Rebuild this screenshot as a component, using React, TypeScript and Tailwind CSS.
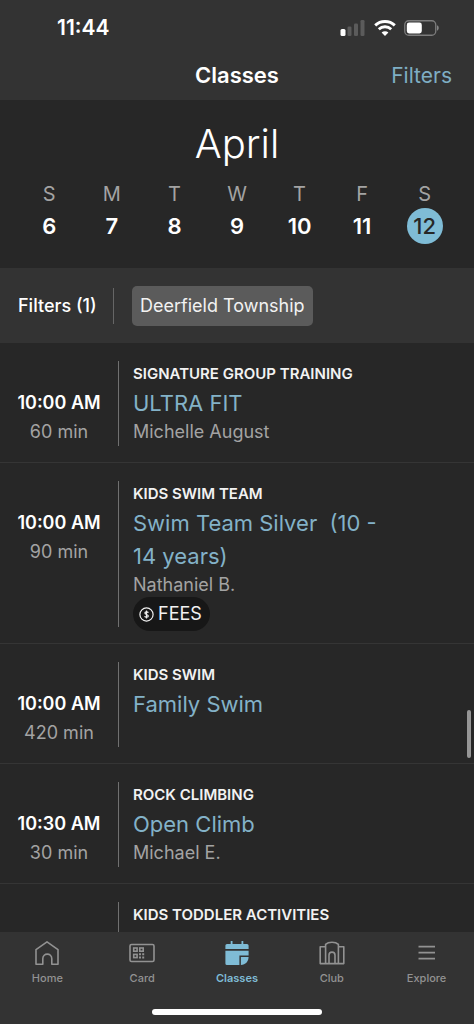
import React from "react";

type ClassItem = {
  time: string;
  duration: string;
  category: string;
  title: string;
  instructor?: string;
  fees?: boolean;
};

const days = [
  { letter: "S", date: 6 },
  { letter: "M", date: 7 },
  { letter: "T", date: 8 },
  { letter: "W", date: 9 },
  { letter: "T", date: 10 },
  { letter: "F", date: 11 },
  { letter: "S", date: 12, selected: true },
];

const classes: ClassItem[] = [
  { time: "10:00 AM", duration: "60 min", category: "SIGNATURE GROUP TRAINING", title: "ULTRA FIT", instructor: "Michelle August" },
  { time: "10:00 AM", duration: "90 min", category: "KIDS SWIM TEAM", title: "Swim Team Silver\u00a0 (10 - 14 years)", instructor: "Nathaniel B.", fees: true },
  { time: "10:00 AM", duration: "420 min", category: "KIDS SWIM", title: "Family Swim" },
  { time: "10:30 AM", duration: "30 min", category: "ROCK CLIMBING", title: "Open Climb", instructor: "Michael E." },
  { time: "", duration: "", category: "KIDS TODDLER ACTIVITIES", title: "" },
];

function StatusIcons() {
  return (
    <div className="flex items-center gap-2">
      <svg width="26" height="16" viewBox="0 0 26 16" aria-hidden="true">
        <rect x="0.5" y="9" width="5" height="7" rx="1.5" fill="#fff" />
        <rect x="7.5" y="6.5" width="4" height="9.5" rx="1.3" fill="#5b5b5b" />
        <rect x="14" y="3.5" width="4" height="12.5" rx="1.3" fill="#5b5b5b" />
        <rect x="20.5" y="0" width="4" height="16" rx="1.3" fill="#5b5b5b" />
      </svg>
      <svg width="22" height="16" viewBox="0 0 22 16" fill="none" stroke="#fff" strokeWidth="2.9" aria-hidden="true">
        <path d="M1.2 5.4C6.6 .2 15.4 .2 20.8 5.4" />
        <path d="M4.8 9.2C8.3 6 13.7 6 17.2 9.2" />
        <path d="M11 16l-3.4-3.5c1.9-1.7 4.9-1.7 6.8 0z" fill="#fff" stroke="none" />
      </svg>
      <svg width="35" height="16" viewBox="0 0 35 16" aria-hidden="true">
        <rect x="0.75" y="0.75" width="31" height="14.5" rx="4" fill="none" stroke="#7d7d7d" strokeWidth="1.3" />
        <rect x="2.8" y="2.6" width="15" height="10.8" rx="2.3" fill="#fff" />
        <path d="M33 5.3c2.3.9 2.3 4.5 0 5.4z" fill="#858585" />
      </svg>
    </div>
  );
}

function HomeIcon() {
  return (
    <svg width="26" height="26" viewBox="0 0 26 26" fill="none" stroke="currentColor" strokeWidth="1.6" strokeLinejoin="round" aria-hidden="true">
      <path d="M2 9.6L13 1.8l11 7.8v14.6h-6.2v-5.4c0-6.2-9-6.2-9 0v5.4H2z" />
    </svg>
  );
}

function CardIcon() {
  return (
    <svg width="26" height="26" viewBox="0 0 26 26" fill="none" stroke="currentColor" strokeWidth="1.6" aria-hidden="true">
      <rect x="1" y="4.5" width="24" height="17" rx="1.5" />
      <rect x="4.7" y="8" width="3.4" height="3.2" />
      <rect x="10.8" y="8" width="3.4" height="3.2" />
      <rect x="4.7" y="14.4" width="3.4" height="3.2" />
      <path d="M10 14.2h2M13.2 14.2h2M10 17.5h2M13.2 17.5h2" strokeWidth="2" />
    </svg>
  );
}

function ClassesIcon() {
  return (
    <svg width="26" height="26" viewBox="0 0 26 26" fill="currentColor" aria-hidden="true">
      <path d="M6.7 1h1.8v3h9V1h1.8v3H23a1.6 1.6 0 0 1 1.6 1.6V9H1.4V5.6A1.6 1.6 0 0 1 3 4h3.7z" />
      <path d="M1.4 10.8h23.2v4.7h-9.2V25H3a1.6 1.6 0 0 1-1.6-1.6z" />
      <path d="M16.9 17h7.7c-.3 4.7-3 7.7-7.7 8z" />
    </svg>
  );
}

function ClubIcon() {
  return (
    <svg width="26" height="26" viewBox="0 0 26 26" fill="none" stroke="currentColor" strokeWidth="1.6" strokeLinejoin="round" aria-hidden="true">
      <path d="M6.6 23.6V4.4c3-2.9 9.8-2.9 12.8 0v19.2" />
      <path d="M6.6 6.8H1.2v16.8h23.6V6.8h-5.4" />
      <path d="M10 23.6v-8.4c0-4.1 6-4.1 6 0v8.4" />
    </svg>
  );
}

function ExploreIcon() {
  return (
    <svg width="26" height="26" viewBox="0 0 26 26" fill="none" stroke="currentColor" strokeWidth="1.8" aria-hidden="true">
      <path d="M4.5 6.7H21M4.5 12.7H21M4.5 18.7H21" />
    </svg>
  );
}

const tabs = [
  { label: "Home", Icon: HomeIcon },
  { label: "Card", Icon: CardIcon },
  { label: "Classes", Icon: ClassesIcon, active: true },
  { label: "Club", Icon: ClubIcon },
  { label: "Explore", Icon: ExploreIcon },
];

function FeesBadge() {
  return (
    <div className="h-[30px]">
      <span className="inline-flex h-[34px] items-center gap-1 rounded-full bg-[#171717] pr-2 pl-[6px] text-lg leading-6 text-[#f2f2f2]">
        <svg width="15" height="15" viewBox="0 0 15 15" fill="none" stroke="currentColor" strokeWidth="1.2" aria-hidden="true">
          <circle cx="7.5" cy="7.5" r="6.6" />
          <path d="M9.3 5.8C8.8 4.5 5.9 4.6 5.9 6c0 1.8 3.4 1.1 3.4 3 0 1.6-3 1.7-3.7.2M7.5 3.6v7.8" />
        </svg>
        FEES
      </span>
    </div>
  );
}

function ClassRow({ item }: { item: ClassItem }) {
  return (
    <li className="flex border-b border-[#353535] pt-[18px] pb-4">
      <div className="w-[118px] shrink-0 pt-[27px] text-center text-lg leading-[29px]">
        <p className="font-semibold text-white">{item.time}</p>
        <p className="text-[#a3a3a3]">{item.duration}</p>
      </div>
      <div className="min-h-[85px] min-w-0 flex-1 border-l border-[#707070] pr-[84px] pl-[14px]">
        <p className="text-[15px] leading-[26px] font-semibold whitespace-nowrap text-[#f2f2f2]">{item.category}</p>
        {item.title && (
          <a href="#class" className="block text-[22px] leading-[33px] text-[#83b2c8]">{item.title}</a>
        )}
        {item.instructor && <p className="text-lg leading-6 text-[#a3a3a3]">{item.instructor}</p>}
        {item.fees && <FeesBadge />}
      </div>
    </li>
  );
}

export default function App() {
  return (
    <div className="flex h-screen flex-col bg-[#272727] font-['Inter',sans-serif] text-white">
      <header className="shrink-0 bg-[#333333]">
        <div className="flex h-14 items-center justify-between pr-[35px] pl-[57px]">
          <time className="text-[21px] font-semibold">11:44</time>
          <StatusIcons />
        </div>
        <div className="grid h-11 grid-cols-3 items-baseline px-[22px] pt-[3px]">
          <h1 className="col-start-2 text-center text-[22px] font-semibold">Classes</h1>
          <button type="button" className="justify-self-end text-[21px] text-[#7faec4]">Filters</button>
        </div>
      </header>

      <section className="shrink-0 px-[18px] pt-5 pb-6">
        <h2 className="text-center text-[40px] leading-[48px] font-light">April</h2>
        <div className="grid grid-cols-7 pt-3">
          {days.map((day) => (
            <button type="button" key={day.date} className="flex flex-col items-center">
              <span className="text-xl leading-7 text-[#a3a3a3]">{day.letter}</span>
              <span
                className={
                  day.selected
                    ? "flex size-9 items-center justify-center rounded-full bg-[#7fbcd6] text-[22px] font-medium text-[#272727]"
                    : "flex size-9 items-center justify-center text-[22px] font-semibold"
                }
              >
                {day.date}
              </span>
            </button>
          ))}
        </div>
      </section>

      <section className="flex h-[75px] shrink-0 items-center bg-[#333333] pl-[18px]">
        <button type="button" className="w-[95px] text-left text-lg font-medium whitespace-nowrap">Filters (1)</button>
        <div className="h-9 w-px bg-[#666666]" />
        <button type="button" className="ml-[18px] h-10 rounded-[5px] bg-[#5b5b5b] px-2 text-lg text-[#f2f2f2]">
          Deerfield Township
        </button>
      </section>

      <main className="relative min-h-0 flex-1 overflow-hidden">
        <ul>
          {classes.map((item) => (
            <ClassRow key={item.category} item={item} />
          ))}
        </ul>
        <div className="absolute top-[367px] right-[3px] h-12 w-1 rounded-full bg-[#969696]" />
      </main>

      <nav className="shrink-0 bg-[#333333] pb-[9px]">
        <div className="grid grid-cols-5 pt-2">
          {tabs.map(({ label, Icon, active }) => (
            <a
              key={label}
              href={"#" + label.toLowerCase()}
              className={
                active
                  ? "flex flex-col items-center gap-1 text-[11px] leading-4 font-semibold text-[#7fbcd6]"
                  : "flex flex-col items-center gap-1 text-[11px] leading-4 font-medium text-[#929292]"
              }
            >
              <Icon />
              {label}
            </a>
          ))}
        </div>
        <div className="mx-auto mt-[23px] h-[6px] w-[36%] rounded-full bg-white" />
      </nav>
    </div>
  );
}
